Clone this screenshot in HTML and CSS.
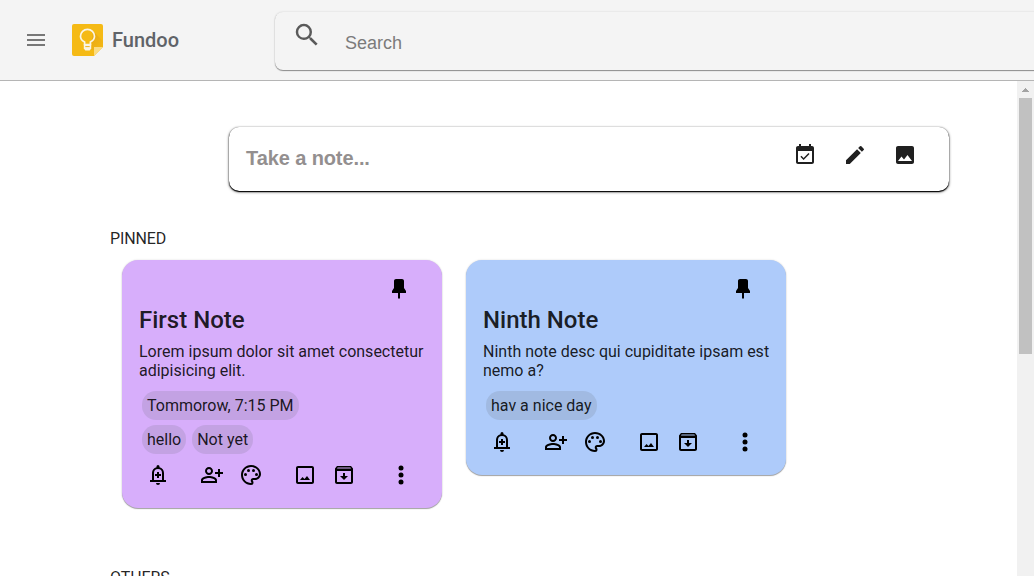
FILE: index.html
```html
<!DOCTYPE html>
<html lang="en">
<head>
<meta charset="utf-8">
<title>Fundoo</title>
<link rel="stylesheet" href="styles.css">
</head>
<body>
<svg class="sprite">
  <symbol id="bell" viewBox="0 0 24 24"><path fill-rule="evenodd" d="M10.500 4.200V3.500a1.500 1.500 0 0 1 3 0v.7C16.100 4.900 18 7.200 18 10v7h2v2H4v-2h2v-7c0-2.800 1.900-5.100 4.500-5.800zM8 17h8v-7a4 4 0 0 0-8 0z"/><path d="M10 20h4a2 2 0 0 1-4 0zM11 9h2v2h2v2h-2v2h-2v-2H9v-2h2z"/></symbol>
  <symbol id="person" viewBox="0 0 24 24"><path fill-rule="evenodd" d="M9 12c2.210 0 4-1.790 4-4s-1.790-4-4-4-4 1.790-4 4 1.790 4 4 4zm0-6c1.100 0 2 .9 2 2s-.9 2-2 2-2-.9-2-2 .9-2 2-2zm0 7c-2.670 0-8 1.340-8 4v3h16v-3c0-2.660-5.330-4-8-4zm6 5H3v-.990C3.200 16.290 6.300 15 9 15s5.800 1.290 6 2v1zm3-4v-3h-3V9h3V6h2v3h3v2h-3v3h-2z"/></symbol>
  <symbol id="palette" viewBox="0 0 24 24"><path d="M12 22C6.490 22 2 17.510 2 12S6.490 2 12 2s10 4.040 10 9c0 3.310-2.690 6-6 6h-1.770c-.28 0-.5.22-.5.5 0 .12.05.23.13.33.41.47.64 1.060.64 1.670A2.500 2.500 0 0 1 12 22zm0-18c-4.410 0-8 3.590-8 8s3.590 8 8 8c.28 0 .5-.22.5-.5a.54.54 0 0 0-.14-.35c-.41-.46-.63-1.050-.63-1.650a2.500 2.500 0 0 1 2.500-2.500H16c2.210 0 4-1.790 4-4 0-3.860-3.590-7-8-7z"/><circle cx="6.500" cy="11.500" r="1.500"/><circle cx="9.500" cy="7.500" r="1.500"/><circle cx="14.500" cy="7.500" r="1.500"/><circle cx="17.500" cy="11.500" r="1.500"/></symbol>
  <symbol id="picture" viewBox="0 0 24 24"><path d="M19 5v14H5V5h14m0-2H5c-1.100 0-2 .9-2 2v14c0 1.100.9 2 2 2h14c1.100 0 2-.9 2-2V5c0-1.100-.9-2-2-2z"/><path d="M14 13l-2.500 3L9.500 14 7 17h10z"/></symbol>
  <symbol id="archive" viewBox="0 0 24 24"><path fill-rule="evenodd" d="M5 3h14l2 2.500V19c0 1.100-.9 2-2 2H5c-1.100 0-2-.9-2-2V5.500zM5.600 4.600l-.6.900h14l-.6-.9zM5 8v11h14V8z"/><path d="M11 10h2v3h3l-4 4-4-4h3z"/></symbol>
  <symbol id="more" viewBox="0 0 24 24"><circle cx="12" cy="5" r="2.500"/><circle cx="12" cy="12" r="2.500"/><circle cx="12" cy="19" r="2.500"/></symbol>
  <symbol id="pin" viewBox="0 0 24 24"><path d="M17 4v7l2 3v2h-6v5l-1 1-1-1v-5H5v-2l2-3V4c0-1.100.9-2 2-2h6c1.110 0 2 .89 2 2z"/></symbol>
</svg>

<header class="toolbar">
  <svg class="menu" viewBox="0 0 24 24"><path d="M3 18h18v-2H3v2zm0-5h18v-2H3v2zm0-7v2h18V6H3z"/></svg>
  <svg class="logo" viewBox="0 0 31 32">
    <defs><linearGradient id="shade" x1="0" y1="0" x2="1" y2="1"><stop offset="0" stop-color="#e6a514"/><stop offset="1" stop-color="#f5ba15"/></linearGradient></defs>
    <path d="M2 0h27a2 2 0 0 1 2 2v21l-9 9H2a2 2 0 0 1-2-2V2a2 2 0 0 1 2-2z" fill="#f5ba15"/>
    <path d="M21 7l10 10v6h-9v3l-3 0z" fill="url(#shade)"/>
    <path d="M22 23h9l-9 9z" fill="#fbdc83"/>
    <path d="M12.600 20.500v-2.400c-2.600-1.200-4.100-3.100-4.100-5.800a7 7 0 0 1 14 0c0 2.700-1.500 4.600-4.100 5.800v2.400z" fill="none" stroke="#faf5e6" stroke-width="1.700"/>
    <path d="M11.800 20h7.400v4.500l-1.500 2h-4.400l-1.500-2z" fill="#faf5e6"/>
    <path d="M13.300 22.600h4.400" stroke="#efb11d"/>
  </svg>
  <span class="brand">Fundoo</span>
  <div class="search">
    <svg class="glass" viewBox="0 0 24 24"><path d="M15.500 14h-.79l-.28-.27A6.471 6.471 0 0 0 16 9.500 6.500 6.500 0 1 0 9.500 16c1.610 0 3.090-.59 4.230-1.570l.27.28v.79l5 4.990L20.490 19l-4.990-5zm-6 0C7.010 14 5 11.990 5 9.500S7.010 5 9.500 5 14 7.010 14 9.500 11.990 14 9.500 14z"/></svg>
    <span class="hint">Search</span>
  </div>
</header>

<div class="body">
  <main class="content">
    <div class="take">
      <span class="take-text">Take a note...</span>
      <svg viewBox="0 0 24 24"><path d="M16.530 11.060L15.470 10l-4.880 4.880-2.120-2.120-1.060 1.060L10.590 17l5.940-5.940zM19 3h-1V1h-2v2H8V1H6v2H5c-1.110 0-1.990.9-1.990 2L3 19c0 1.100.89 2 2 2h14c1.100 0 2-.9 2-2V5c0-1.100-.9-2-2-2zm0 16H5V8h14v11z"/></svg>
      <svg viewBox="0 0 24 24"><path d="M3 17.250V21h3.750L17.810 9.940l-3.750-3.750L3 17.250zM20.710 7.040a.996.996 0 0 0 0-1.410l-2.340-2.340a.996.996 0 0 0-1.410 0l-1.830 1.830 3.750 3.750 1.830-1.830z"/></svg>
      <svg viewBox="0 0 24 24"><path d="M21 19V5c0-1.100-.9-2-2-2H5c-1.100 0-2 .9-2 2v14c0 1.100.9 2 2 2h14c1.100 0 2-.9 2-2zM8.500 13.500l2.500 3.010L14.500 12l4.500 6H5l3.500-4.500z"/></svg>
    </div>

    <h2 class="section">PINNED</h2>
    <div class="notes">
      <article class="note purple">
        <svg class="pin"><use href="#pin"/></svg>
        <h3 class="title">First Note</h3>
        <p class="desc">Lorem ipsum dolor sit amet consectetur adipisicing elit.</p>
        <div class="chips"><span class="chip">Tommorow, 7:15 PM</span></div>
        <div class="chips"><span class="chip">hello</span><span class="chip">Not yet</span></div>
        <div class="actions">
          <svg><use href="#bell"/></svg><svg class="wide"><use href="#person"/></svg><svg><use href="#palette"/></svg><svg class="mid"><use href="#picture"/></svg><svg><use href="#archive"/></svg><svg class="last"><use href="#more"/></svg>
        </div>
      </article>
      <article class="note blue">
        <svg class="pin"><use href="#pin"/></svg>
        <h3 class="title">Ninth Note</h3>
        <p class="desc">Ninth note desc qui cupiditate ipsam est nemo a?</p>
        <div class="chips"><span class="chip">hav a nice day</span></div>
        <div class="actions">
          <svg><use href="#bell"/></svg><svg class="wide"><use href="#person"/></svg><svg><use href="#palette"/></svg><svg class="mid"><use href="#picture"/></svg><svg><use href="#archive"/></svg><svg class="last"><use href="#more"/></svg>
        </div>
      </article>
    </div>
    <h2 class="section others">OTHERS</h2>
  </main>
  <div class="scrollbar">
    <svg class="arrow" viewBox="0 0 7 4"><path d="M3 0h1v1h1v1h1v1h1v1H0V3h1V2h1V1h1z"/></svg>
    <div class="thumb"></div>
  </div>
</div>
</body>
</html>
```
FILE: styles.css
```css
* { box-sizing: border-box; }
body {
  margin: 0;
  height: 576px;
  overflow: hidden;
  display: flex;
  flex-direction: column;
  background: #fff;
  color: rgba(0, 0, 0, .87);
  font-family: Roboto, "Liberation Sans", sans-serif;
}
svg { display: block; flex: none; width: 24px; height: 24px; }
.sprite { display: none; }

.toolbar {
  flex: none;
  display: flex;
  align-items: center;
  height: 81px;
  padding-left: 24px;
  background: #f4f4f4;
  border-bottom: 1px solid #b5b5b5;
}
.menu { fill: #777; }
.logo { width: 31px; height: 32px; margin-left: 24px; }
.brand { flex: none; width: 163px; margin-left: 9px; font-size: 20px; font-weight: 500; color: #5f6368; }
.search {
  flex: none;
  display: flex;
  width: 800px;
  height: 58px;
  margin-top: 2px;
  padding: 8px 17px;
  border-radius: 8px;
  box-shadow: 0 1px 1px rgba(0, 0, 0, .4), 0 0 2px rgba(0, 0, 0, .16);
}
.glass { width: 30px; height: 30px; fill: #5a5a5a; }
.hint { margin: 12px 0 0 23px; font: 18px/22px "Liberation Sans", Arial, sans-serif; color: #7b7b7b; }

.body { flex: 1; display: flex; min-height: 0; }
.content { flex: 1; min-width: 0; padding: 46px 0 0 110px; overflow: hidden; }
.take {
  display: flex;
  align-items: center;
  width: 720px;
  height: 64px;
  margin-left: 119px;
  padding: 0 32.500px 8px 17px;
  gap: 26px;
  border-radius: 10px;
  box-shadow: 0 1px 1px #000, 0 1px 3px rgba(0, 0, 0, .65), 0 0 1px rgba(0, 0, 0, .4);
}
.take-text { flex: 1; padding-top: 6px; font: bold 20px/24px "Liberation Sans", Arial, sans-serif; letter-spacing: -.1px; color: #938f8f; }
.take svg { fill: #202020; }

.section { margin: 38px 0 12px; font-size: 16px; font-weight: 400; line-height: 19px; letter-spacing: -.1px; }
.others { margin-top: 60px; }
.notes { display: flex; align-items: flex-start; gap: 24px; padding-left: 12px; }
.note {
  width: 320px;
  padding: 17px 17px;
  border-radius: 16px;
  box-shadow: 0 1px 1px rgba(0, 0, 0, .34), 0 0 2px rgba(0, 0, 0, .16);
}
.purple { height: 248px; background: #d7aefb; }
.blue { height: 215px; background: #aecbfa; }
.pin { margin: 0 14px 0 auto; }
.title { margin: 3px 0 6px; font-size: 24px; font-weight: 500; line-height: 32px; }
.desc { margin: 0 -4px 11px 0; font-size: 16px; font-weight: 400; line-height: 19px; }
.chips { display: flex; gap: 6px; margin: 0 0 5px 3px; }
.chip { height: 29px; padding: 0 5px; border-radius: 14px; background: rgba(95, 99, 104, .16); font-size: 16px; font-weight: 400; line-height: 29px; }
.actions { display: flex; padding: 4px 0 0 7px; }
.blue .actions { padding-top: 5px; }
.wide { margin-left: 30px; }
.wide + svg { margin-left: 15px; }
.mid { margin-left: 30px; }
.mid + svg { margin-left: 15px; }
.last { margin-left: 33px; }

.scrollbar { width: 17px; padding: 7px 2px 0; background: #f1f1f1; }
.arrow { width: 7px; height: 4px; margin: 0 auto 6px 3px; fill: #a3a3a3; }
.thumb { height: 256px; background: #c1c1c1; }
```
